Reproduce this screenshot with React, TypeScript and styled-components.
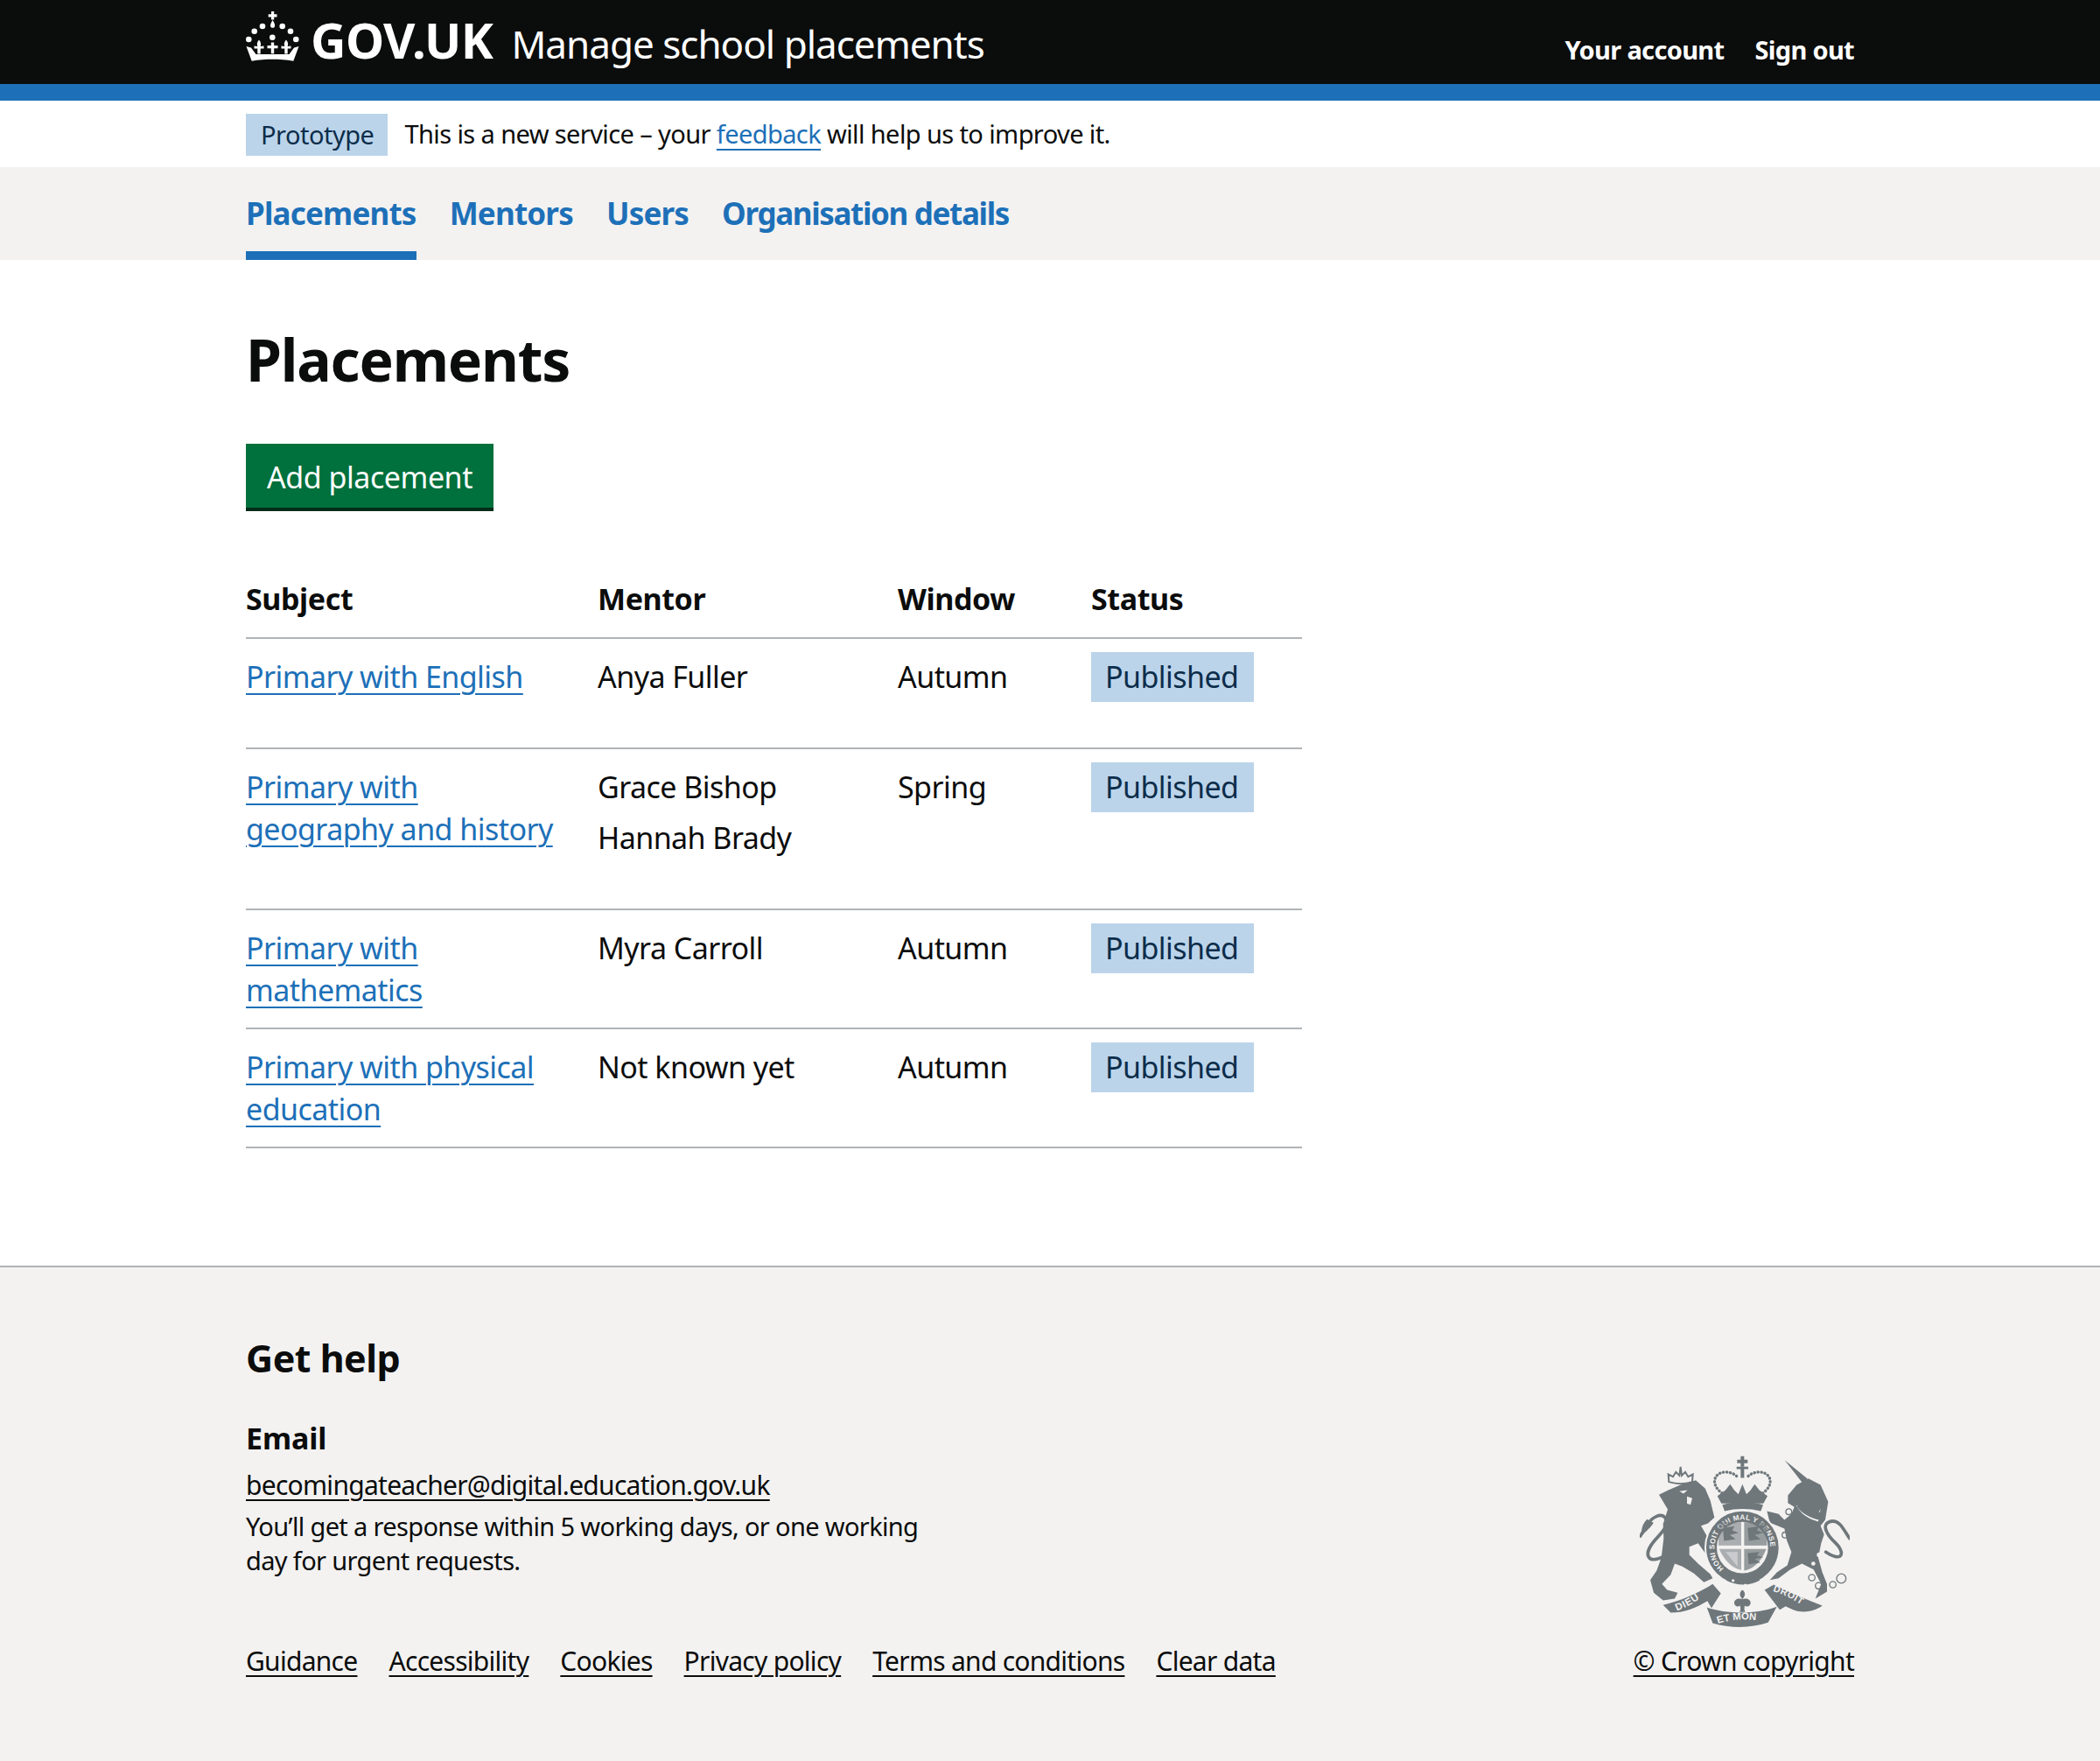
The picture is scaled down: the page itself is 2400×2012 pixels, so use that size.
import React from "react";
import styled, { createGlobalStyle } from "styled-components";

const FONT = `"Noto Sans", "Open Sans", Arial, sans-serif`;
const INK = "#0b0c0c";
const BLUE = "#1d70b8";
const PANEL = "#f3f2f1";
const RULE = "#b1b4b6";
const CREST = "#6f777b";

const Global = createGlobalStyle`
  html, body { margin: 0; padding: 0; background: #fff; }
  body { font-family: ${FONT}; color: ${INK}; }
`;

const Wrap = styled.div`
  width: 1838px;
  margin: 0 auto;
`;

const Masthead = styled.header`
  background: ${INK};
  border-bottom: 19px solid ${BLUE};
  height: 115px;
  box-sizing: border-box;
`;
const MastRow = styled(Wrap)`
  display: flex;
  align-items: flex-start;
  justify-content: space-between;
  height: 96px;
`;
const Brand = styled.div`
  display: flex;
  align-items: center;
  height: 96px;
  box-sizing: border-box;
`;
const CrownSvg = styled.svg`
  width: 61px;
  height: 58px;
  margin: -12px 13px 0 0;
  fill: #fff;
`;
const Wordmark = styled.span`
  font: 700 56px/1 ${FONT};
  letter-spacing: -0.6px;
  color: #fff;
  margin: -6px 21px 0 0;
`;
const ServiceName = styled.span`
  font: 400 44px/1 ${FONT};
  letter-spacing: -1px;
  color: #fff;
  margin-top: 3px;
`;
const AccountNav = styled.nav`
  display: flex;
  gap: 35px;
  padding-top: 36px;
`;
const AccountLink = styled.a`
  font: 700 29px/42px ${FONT};
  letter-spacing: -0.67px;
  color: #fff;
`;

const Phase = styled(Wrap)`
  display: flex;
  align-items: center;
  gap: 19px;
  height: 76px;
  padding-top: 2px;
  box-sizing: border-box;
`;
const PhaseTag = styled.strong`
  font: 400 29px/48px ${FONT};
  letter-spacing: -0.5px;
  background: #bbd4ea;
  color: #0c2d4a;
  padding: 0 16px 0 17px;
`;
const PhaseText = styled.span`
  font: 400 29px/42px ${FONT};
  letter-spacing: -0.6px;
  margin-top: -2px;
`;
const Link = styled.a`
  color: ${BLUE};
  text-decoration: underline;
  text-decoration-thickness: 2px;
  text-underline-offset: 6px;
`;

const Tabs = styled.nav`
  background: ${PANEL};
  height: 106px;
`;
const TabRow = styled(Wrap)`
  display: flex;
  gap: 38px;
  height: 106px;
`;
const Tab = styled.a<{ $active?: boolean; $tight?: boolean }>`
  font: 700 35px/106px ${FONT};
  letter-spacing: ${(p) => (p.$tight ? "-1.35px" : "-0.8px")};
  color: ${BLUE};
  box-sizing: border-box;
  height: 106px;
  border-bottom: 10px solid ${(p) => (p.$active ? BLUE : "transparent")};
`;

const Main = styled(Wrap)`
  padding: 77px 0 134px;
`;
const Title = styled.h1`
  font: 700 66px/1.1 ${FONT};
  letter-spacing: -1.2px;
  margin: 0 0 60px;
`;
const Button = styled.button`
  display: block;
  width: 283px;
  height: 77px;
  border: 0;
  padding: 0;
  background: #00703c;
  box-shadow: inset 0 -4px 0 #002d18;
  color: #fff;
  font: 400 34px/1 ${FONT};
  letter-spacing: -0.45px;
`;
const Table = styled.table`
  width: 1207px;
  margin-top: 76px;
  border-collapse: collapse;
  table-layout: fixed;
  font: 400 34px/48px ${FONT};
  letter-spacing: -0.55px;
`;
const Th = styled.th<{ $w: number }>`
  width: ${(p) => p.$w}px;
  text-align: left;
  font-weight: 700;
  padding: 0 0 20px;
  letter-spacing: -0.4px;
  border-bottom: 2px solid ${RULE};
`;
const Td = styled.td`
  padding: 19px 30px 19px 0;
  vertical-align: top;
  border-bottom: 2px solid ${RULE};
`;
const Name = styled.p`
  margin: 0 0 9.5px;
  &:last-child { margin-bottom: 38.5px; }
`;
const StatusTag = styled.strong`
  display: inline-block;
  font-weight: 400;
  background: #bbd4ea;
  color: #0c2d4a;
  padding: 0 16px;
  width: 186px;
  box-sizing: border-box;
  line-height: 57px;
  margin-top: -4px;
  white-space: nowrap;
`;

const Foot = styled.footer`
  background: ${PANEL};
  border-top: 2px solid ${RULE};
  height: 566px;
  box-sizing: border-box;
`;
const FootRow = styled(Wrap)`
  display: flex;
  justify-content: space-between;
  padding-top: 79px;
`;
const FootMain = styled.div`
  display: flex;
  flex-direction: column;
`;
const Help = styled.h2`
  font: 700 43px/50px ${FONT};
  letter-spacing: -0.5px;
  margin: 0 0 43px;
`;
const Sub = styled.h3`
  font: 700 34px/46px ${FONT};
  letter-spacing: -0.1px;
  margin: 0 0 12px;
`;
const FootLink = styled.a`
  color: ${INK};
  font: 400 30px/38px ${FONT};
  letter-spacing: -0.72px;
  text-decoration: underline;
  text-decoration-thickness: 2px;
  text-underline-offset: 5px;
`;
const Note = styled.p`
  font: 400 29px/38.5px ${FONT};
  letter-spacing: -0.65px;
  width: 790px;
  margin: 9px 0 77px;
`;
const FootLinks = styled.div`
  display: flex;
  gap: 36px;
`;
const Copyright = styled.div`
  display: flex;
  flex-direction: column;
  align-items: flex-end;
  justify-content: flex-end;
`;
const Crest = styled.svg`
  width: 240px;
  height: 197px;
  margin: 0 5px 19px 0;
  fill: ${CREST};
`;

const Crown = () => (
  <CrownSvg viewBox="0 0 61 58" aria-hidden="true">
    <path d="M29 0h3.200v3.200h3.300v3.300h-3.300v3h-3.200v-3h-3.300V3.200h3.300z" />
    <path d="M30.600 10c2 3 3.200 5.500 2.200 7.800-.5 1.300-3.900 1.300-4.400 0-1-2.300.2-4.800 2.200-7.800z" />
    <circle cx="19" cy="17" r="3.300" />
    <circle cx="41.700" cy="17" r="3.300" />
    <circle cx="9.700" cy="22.700" r="3.300" />
    <circle cx="51" cy="22.700" r="3.300" />
    <circle cx="3.300" cy="32" r="3.300" />
    <circle cx="57.300" cy="32" r="3.300" />
    <circle cx="30.300" cy="29.700" r="3.300" />
    <path d="M.5 40l5.500 1.500 5.500 7.500h38l5.500-7.500L60.500 40l-6.200 16.800c-15.500-2.600-32-2.600-47.600 0z" />
    <path d="M28.800 35.500h3.400v3.500h4.300v3.300h-4.300v6h-3.400v-6h-4.300V39h4.300z" />
    <path d="M15 32.500c2 2.500 2.800 4.500 1.700 7.400l3.800-.4v2.900h-3.800v6h-3.400v-6h-3.800v-2.900l3.800.4c-1.100-2.900-.3-4.900 1.700-7.400z" />
    <path d="M46 32.500c2 2.500 2.800 4.500 1.700 7.400l3.800-.4v2.900h-3.800v6h-3.400v-6h-3.800v-2.900l3.800.4c-1.100-2.900-.3-4.900 1.700-7.400z" />
  </CrownSvg>
);

const CrestMark = () => (
  <Crest viewBox="100 70 720 590" aria-hidden="true">
    <defs>
      <path id="ring" d="M388 457 A96 96 0 1 1 516 457" />
      <path id="dieu" d="M228 602 C262 588 300 568 335 535" />
      <path id="mon" d="M368 646 C420 628 480 628 535 640" />
      <path id="droit" d="M556 534 C600 548 640 568 678 600" />
    </defs>

    {/* royal crown */}
    <path d="M446 72h12v12h12v12h-12v12h-12V96h-12V84h12z" />
    <path d="M432 108h40v8h-14v30h-12v-30h-14z" />
    <path d="M366 208l28-20 16-20 14 20 14 14 14-34 14 34 14-14 14-20 16 20 28 20-14 26H380z" />
    <path d="M383 238c40-12 100-12 140 0l-8 22c-40-10-84-10-124 0z" />
    <g fill="none" stroke={CREST} strokeWidth="10" strokeDasharray="1 11" strokeLinecap="round">
      <path d="M432 140c-20-18-58-20-72 4-10 20 4 42 22 54" />
      <path d="M472 140c20-18 58-20 72 4 10 20-4 42-22 54" />
    </g>

    {/* lion crown and body */}
    <path d="M200 160l-2-26 16 8 10-16 12 12 4-30 4 30 12-12 10 16 16-8-2 26c-26 8-54 8-80 0z" fill="none" stroke={CREST} strokeWidth="6" />
    <path d="M198 188l42-18 52-16 32 28 18 42 14 58-22 20-24 8 38 66 12 34-24 10-36-50-30 12v28l30 30 42 36 8 14-30 14-34-30-40-24-26-10-14 38-30 32 18 20 36 10-10 20-40 6-32-26-12-44 22-32 16-44 8-66-2-50 16-50-30-50z" />
    <path d="M236 192l28-4-14 12zM262 210l18 6-6 22-12-4z" fill={PANEL} />
    <path d="M188 412C130 446 108 412 150 362c26-30 50-50 38-78-14-20-48-4-64 26l-22 36" fill="none" stroke={CREST} strokeWidth="11" strokeLinecap="round" />
    <path d="M125 288c-10 10-22 28-18 56 14-14 34-30 40-44z" />

    {/* unicorn */}
    <path d="M597 85l78 64-16 16z" />
    <path d="M608 206l30-36 40-22 42 22 26 58-10 62-16 20 12 30-10 30-10 50 14 50 16 40v26l-40 24 20-50-26-50-40-20-40 20-40 30-30 6 24-26 36-24 14-46-16-40-8-40-50-20-10-40 40 10 20 20 24-20 10-24-22-14z" />
    <path d="M636 240l70 40 14-28-8 44c-30-8-58-22-76-56z" fill={PANEL} />
    <path d="M640 244l8-6 6 6 8-4 4 8 8-4 6 8 8-4 6 8 8-2 6 10 10 0 4 10-8 16c-30-8-58-22-76-46z" />
    <path d="M738 400c60 40 66 0 34-30-36-34-52-70-12-76 30 0 40 34 60 60" fill="none" stroke={CREST} strokeWidth="11" strokeLinecap="round" />
    <g fill="none" stroke={CREST} strokeWidth="4">
      <circle cx="611" cy="262" r="10" />
      <circle cx="598" cy="342" r="10" />
      <circle cx="690" cy="488" r="11" />
      <circle cx="713" cy="516" r="11" />
      <circle cx="762" cy="512" r="11" />
      <circle cx="791" cy="491" r="16" />
    </g>
    <circle cx="715" cy="410" r="8" fill={PANEL} />
    <circle cx="695" cy="440" r="7" fill={PANEL} />

    {/* garter and shield */}
    <circle cx="452" cy="385" r="130" fill={PANEL} />
    <circle cx="452" cy="385" r="106" fill="none" stroke={CREST} strokeWidth="36" />
    <text fontFamily="Liberation Sans, sans-serif" fontWeight="700" fontSize="25" fill={PANEL} letterSpacing="1">
      <textPath href="#ring">HONI SOIT QUI MAL Y PENSE</textPath>
    </text>
    <path d="M370 298h78v80h-78z" opacity=".55" />
    <path d="M458 298h78v80h-78z" opacity=".7" />
    <path d="M372 390h76v72c-30-6-56-30-76-72z" opacity=".55" />
    <path d="M458 390h76c-16 40-42 68-76 74z" opacity=".7" />
    <path d="M385 318l40-6-8 14 22 8-30 8 20 14-40 6zM470 318l40-6-8 14 22 8-30 8 20 14-40 6zM470 404l40-4-8 12 22 6-30 6 20 12-40 6z" />
    <path d="M395 400h40v50z" fill={PANEL} opacity=".45" />
    <path d="M410 475c30 14 60 14 88 0l14 22c-36 20-78 20-116 0z" />
    <circle cx="420" cy="498" r="5" fill={PANEL} />
    <circle cx="462" cy="514" r="5" fill={PANEL} />

    {/* motto scroll */}
    <path d="M180 582c60-14 120-40 170-72l28 32-32 50-14-24c-40 24-80 40-126 40z" />
    <path d="M330 590c70 24 170 24 240-2l-30 54c-60 20-130 20-190 2z" />
    <path d="M528 530l32-18c60 30 110 50 166 72-30 22-70 26-100 14l-26-12-20 12z" />
    <path d="M452 530c14 10 8 24 0 32 12-6 30 0 28 14-2 12-14 14-20 8-2 10-2 16 2 22h-20c4-6 4-12 2-22-6 6-18 4-20-8-2-14 16-20 28-14-8-8-14-22 0-32z" />
    <text fontFamily="Liberation Sans, sans-serif" fontWeight="700" fontSize="34" fill={PANEL} letterSpacing="2">
      <textPath href="#dieu">DIEU</textPath>
    </text>
    <text fontFamily="Liberation Sans, sans-serif" fontWeight="700" fontSize="34" fill={PANEL}>
      <textPath href="#mon">ET MON</textPath>
    </text>
    <text fontFamily="Liberation Sans, sans-serif" fontWeight="700" fontSize="32" fill={PANEL} letterSpacing="2">
      <textPath href="#droit">DROIT</textPath>
    </text>
  </Crest>
);

const rows = [
  { subject: "Primary with English", mentors: ["Anya Fuller"], window: "Autumn" },
  { subject: "Primary with geography and history", mentors: ["Grace Bishop", "Hannah Brady"], window: "Spring" },
  { subject: "Primary with mathematics", mentors: ["Myra Carroll"], window: "Autumn" },
  { subject: "Primary with physical education", mentors: ["Not known yet"], window: "Autumn" },
];

const footerLinks = ["Guidance", "Accessibility", "Cookies", "Privacy policy", "Terms and conditions", "Clear data"];

export default function App() {
  return (
    <>
      <Global />
      <Masthead>
        <MastRow>
          <Brand>
            <Crown />
            <Wordmark>GOV.UK</Wordmark>
            <ServiceName>Manage school placements</ServiceName>
          </Brand>
          <AccountNav>
            <AccountLink>Your account</AccountLink>
            <AccountLink>Sign out</AccountLink>
          </AccountNav>
        </MastRow>
      </Masthead>
      <Phase>
        <PhaseTag>Prototype</PhaseTag>
        <PhaseText>
          This is a new service – your <Link href="#">feedback</Link> will help us to improve it.
        </PhaseText>
      </Phase>
      <Tabs>
        <TabRow>
          <Tab $active>Placements</Tab>
          <Tab>Mentors</Tab>
          <Tab>Users</Tab>
          <Tab $tight>Organisation details</Tab>
        </TabRow>
      </Tabs>
      <Main>
        <Title>Placements</Title>
        <Button>Add placement</Button>
        <Table>
          <thead>
            <tr>
              <Th $w={402}>Subject</Th>
              <Th $w={343}>Mentor</Th>
              <Th $w={221}>Window</Th>
              <Th $w={241}>Status</Th>
            </tr>
          </thead>
          <tbody>
            {rows.map((r) => (
              <tr key={r.subject}>
                <Td><Link href="#">{r.subject}</Link></Td>
                <Td>{r.mentors.map((m) => <Name key={m}>{m}</Name>)}</Td>
                <Td>{r.window}</Td>
                <Td><StatusTag>Published</StatusTag></Td>
              </tr>
            ))}
          </tbody>
        </Table>
      </Main>
      <Foot>
        <FootRow>
          <FootMain>
            <Help>Get help</Help>
            <Sub>Email</Sub>
            <div><FootLink href="#">becomingateacher@digital.education.gov.uk</FootLink></div>
            <Note>You’ll get a response within 5 working days, or one working day for urgent requests.</Note>
            <FootLinks>
              {footerLinks.map((l) => <FootLink key={l} href="#">{l}</FootLink>)}
            </FootLinks>
          </FootMain>
          <Copyright>
            <CrestMark />
            <FootLink href="#">© Crown copyright</FootLink>
          </Copyright>
        </FootRow>
      </Foot>
    </>
  );
}
